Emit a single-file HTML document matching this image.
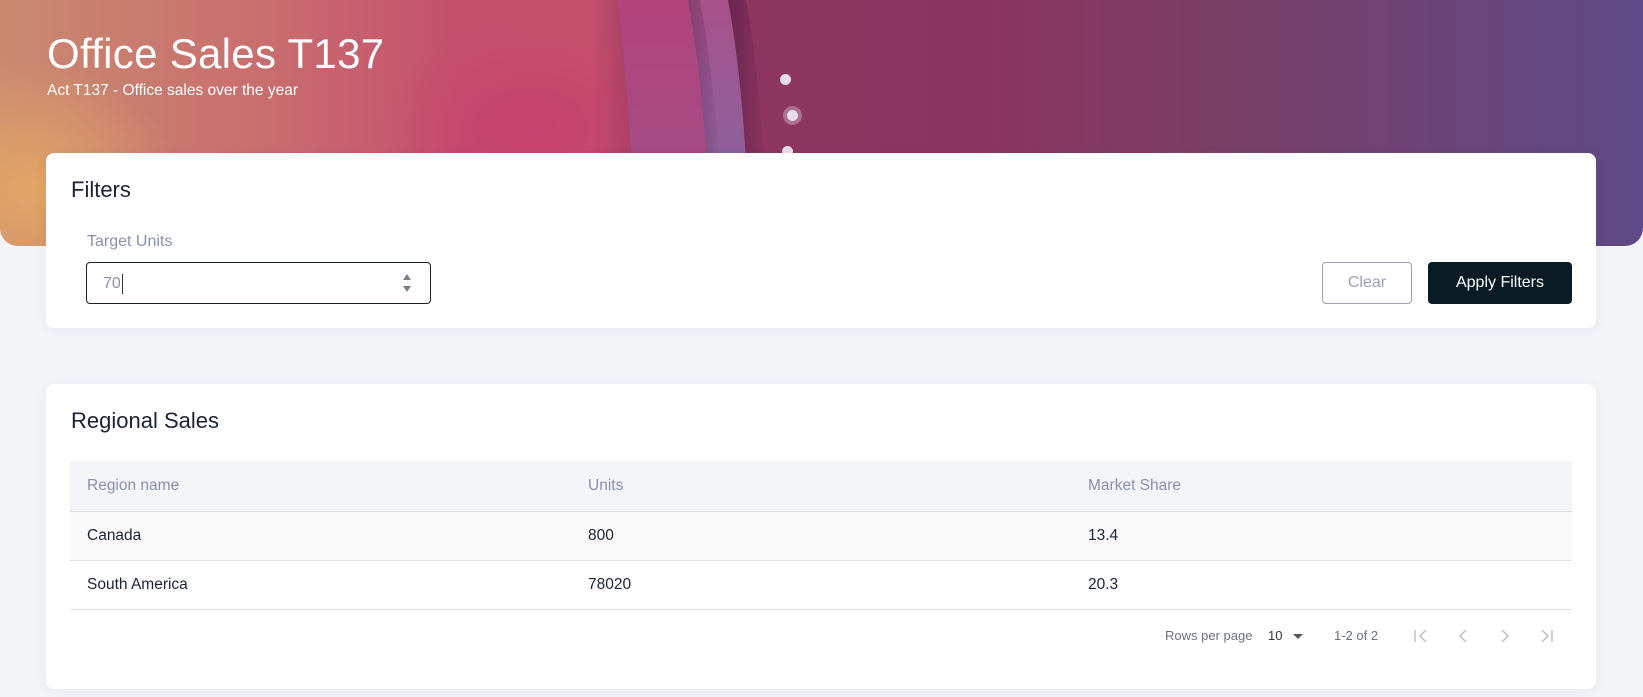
<!DOCTYPE html>
<html><head><meta charset="utf-8"><style>
*{box-sizing:border-box;margin:0;padding:0}
body{width:1643px;height:697px;overflow:hidden;background:#f3f4f8;font-family:"Liberation Sans",sans-serif;position:relative}
.banner{position:absolute;left:0;top:0;width:1643px;height:246px;border-radius:0 0 18px 18px;overflow:hidden;
background:linear-gradient(90deg,#c98a70 0%,#c9706e 15%,#c4506e 28%,#c5506c 36%,#8e3660 40%,#8a3560 60%,#7a4068 75%,#5e4a88 100%)}
.banner .glow{position:absolute;left:-120px;top:60px;width:300px;height:260px;background:radial-gradient(closest-side,#e2a766,rgba(226,167,102,0));}
.banner .glow2{position:absolute;left:380px;top:20px;width:300px;height:220px;background:radial-gradient(closest-side,rgba(200,60,110,.7),rgba(200,60,110,0));}
.dot{position:absolute;width:11px;height:11px;border-radius:50%;background:#e8dcea}
h1{position:absolute;left:47px;top:30px;color:#fff;font-size:42px;font-weight:normal;letter-spacing:.3px}
.sub{position:absolute;left:47px;top:82px;color:#fff;font-size:15.5px}
.card{position:absolute;left:46px;width:1550px;background:#fff;border-radius:8px;box-shadow:0 2px 12px rgba(40,40,80,.06)}
.card h2{position:absolute;left:25px;font-size:22px;font-weight:normal;color:#1b2333}
.lbl{position:absolute;left:41px;top:233px;font-size:16px;color:#8a90a8}
.inp{position:absolute;left:86px;top:262px;width:345px;height:42px;border:1.3px solid #1a1f2e;border-radius:4px;font-size:16px;color:#8a90a8;padding:11px 16px}
.btn{position:absolute;top:262px;height:42px;border-radius:4px;font-size:16px;display:flex;align-items:center;justify-content:center}
.th,.tr{position:absolute;left:70px;width:1502px;font-size:15.5px;color:#1b2333}
.th{top:461px;height:51px;background:#f4f5f9;border-bottom:1px solid #d8dae0;color:#8a90a8}
.tr{border-bottom:1px solid #dfe1e6}
.th span,.tr span{position:absolute;top:50%;transform:translateY(-50%)}
.pg{position:absolute;top:628px;font-size:13px;color:#6c7080}
</style></head><body>
<div class="banner">
<div class="glow"></div><div class="glow2"></div>
<svg style="position:absolute;left:0;top:0" width="1643" height="246">
<defs>
<linearGradient id="g1" x1="0" y1="0" x2="0" y2="1"><stop offset="0" stop-color="#b2437c"/><stop offset="1" stop-color="#a0508a"/></linearGradient>
<linearGradient id="g2" x1="0" y1="0" x2="0" y2="1"><stop offset="0" stop-color="#a8528a"/><stop offset="1" stop-color="#7f68a6"/></linearGradient>
<linearGradient id="sh" x1="0" y1="0" x2="1" y2="0"><stop offset="0" stop-color="rgba(60,20,60,.45)"/><stop offset="1" stop-color="rgba(60,20,60,0)"/></linearGradient>
</defs>
<path d="M617 0 Q628 80 636 246 L760 246 L760 0Z" fill="#8e3560"/>
<path d="M617 0 Q628 80 636 246 L712 246 Q705 90 688 0Z" fill="url(#g1)"/>
<path d="M688 0 Q705 90 712 246 L750 246 Q745 90 728 0Z" fill="url(#g2)"/>
<path d="M728 0 Q745 90 750 246 L768 246 Q763 90 746 0Z" fill="url(#sh)"/>
<path d="M688 0 Q705 90 712 246 L724 246 Q717 90 700 0Z" fill="url(#sh)" opacity=".7"/>
</svg>
<div class="dot" style="left:780px;top:74px"></div>
<div class="dot" style="left:787px;top:110px;box-shadow:0 0 0 4px rgba(255,255,255,.3)"></div>
<div class="dot" style="left:782px;top:146px"></div>
<h1>Office Sales T137</h1>
<div class="sub">Act T137 - Office sales over the year</div>
</div>
<div class="card" style="top:153px;height:175px">
<h2 style="top:24px">Filters</h2>
</div>
<div class="lbl" style="left:87px">Target Units</div>
<div class="inp">70<span style="display:inline-block;width:1px;height:20px;background:#333;vertical-align:middle;margin-left:1px"></span>
<svg style="position:absolute;right:18px;top:9px" width="10" height="22"><path d="M1 8L5 2L9 8Z" fill="#7c7f88"/><path d="M1 14L5 20L9 14Z" fill="#7c7f88"/></svg></div>
<div class="btn" style="left:1322px;width:90px;border:1px solid #9a9fb5;color:#9aa0b4">Clear</div>
<div class="btn" style="left:1428px;width:144px;background:#0b1b26;color:#fff">Apply Filters</div>
<div class="card" style="top:384px;height:305px">
<h2 style="top:24px">Regional Sales</h2>
</div>
<div class="th"><span style="left:17px">Region name</span><span style="left:518px">Units</span><span style="left:1018px">Market Share</span></div>
<div class="tr" style="top:512px;height:49px;background:#fafafa"><span style="left:17px">Canada</span><span style="left:518px">800</span><span style="left:1018px">13.4</span></div>
<div class="tr" style="top:561px;height:49px"><span style="left:17px">South America</span><span style="left:518px">78020</span><span style="left:1018px">20.3</span></div>
<div class="pg" style="left:1165px">Rows per page</div>
<div class="pg" style="left:1268px;color:#333">10</div>
<svg style="position:absolute;left:1293px;top:634px" width="10" height="6"><path d="M0 0L10 0L5 5Z" fill="#555"/></svg>
<div class="pg" style="left:1334px">1-2 of 2</div>
<svg style="position:absolute;left:1412px;top:627px" width="150" height="18" fill="none" stroke="#b8bbc4" stroke-width="1.4">
<path d="M3 3V15M14 3L8 9L14 15"/><path d="M54 3L48 9L54 15"/><path d="M90 3L96 9L90 15"/><path d="M130 3L136 9L130 15M140 3V15"/></svg>
</body></html>
